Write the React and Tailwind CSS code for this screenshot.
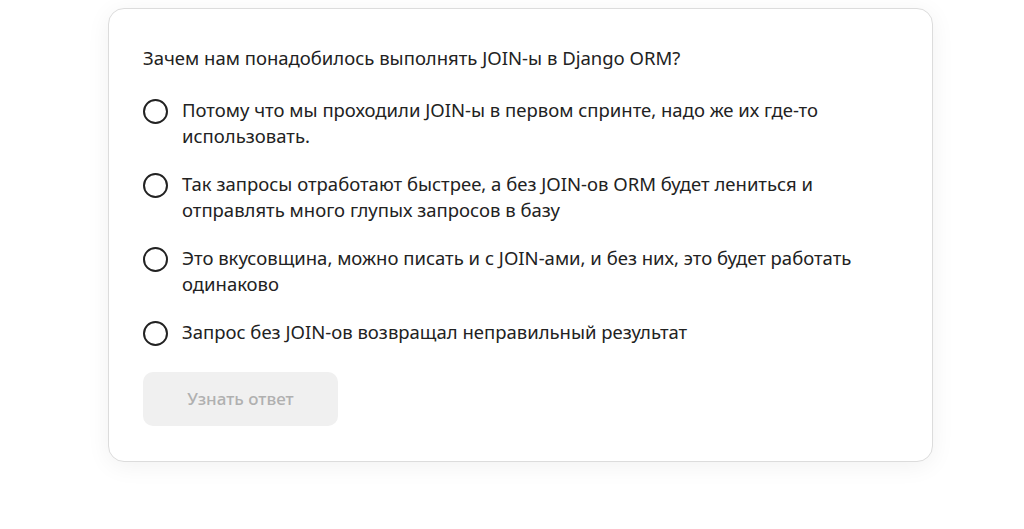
const options = [
  'Потому что мы проходили JOIN-ы в первом спринте, надо же их где-то использовать.',
  'Так запросы отработают быстрее, а без JOIN-ов ORM будет лениться и отправлять много глупых запросов в базу',
  'Это вкусовщина, можно писать и с JOIN-ами, и без них, это будет работать одинаково',
  'Запрос без JOIN-ов возвращал неправильный результат',
];

export default function App() {
  return (
    <div className="min-h-screen bg-white pt-2 font-['Noto_Sans',sans-serif] text-[#222]">
      <div className="ml-[108px] w-[825px] rounded-2xl border border-[#dcdcdc] bg-white px-[34px] pt-[36px] pb-[35px] shadow-[0_4px_24px_rgba(0,0,0,0.06)]">
        <p className="text-[18.5px] leading-[26px]">Зачем нам понадобилось выполнять JOIN-ы в Django ORM?</p>
        <div className="mt-[26px] flex flex-col gap-[22px]">
          {options.map((o) => (
            <label key={o} className="flex cursor-pointer items-start gap-[14px]">
              <span className="mt-[2px] h-[25px] w-[25px] shrink-0 rounded-full border-2 border-[#222]"></span>
              <span className="text-[18.5px] leading-[26px]">{o}</span>
            </label>
          ))}
        </div>
        <button className="mt-[26px] h-[54px] w-[195px] rounded-[10px] bg-[#f0f0f0] text-[17px] font-medium text-[#b0b0b0]">
          Узнать ответ
        </button>
      </div>
    </div>
  );
}
